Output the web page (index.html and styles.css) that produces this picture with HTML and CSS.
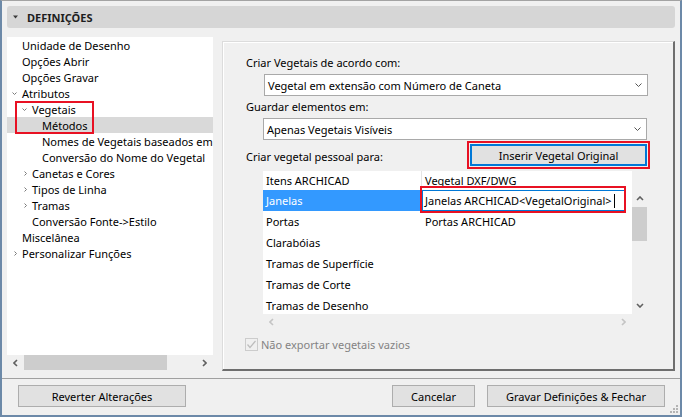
FILE: index.html
```html
<!DOCTYPE html>
<html lang="pt">
<head>
<meta charset="utf-8">
<title>Definições</title>
<link rel="stylesheet" href="styles.css">
</head>
<body>
<div class="win">
  <div class="content">
    <div class="header">
      <svg class="tri" width="5" height="4" viewBox="0 0 5 4"><polygon points="0,0.5 5,0.5 2.5,3.5" fill="#3a3a3a"/></svg>
      <span>DEFINIÇÕES</span>
    </div>
    <div class="main">
      <div class="left">
        <div class="tree">
          <div class="row l0"><span class="tw"></span><span>Unidade de Desenho</span></div>
          <div class="row l0"><span class="tw"></span><span>Opções Abrir</span></div>
          <div class="row l0"><span class="tw"></span><span>Opções Gravar</span></div>
          <div class="row l0"><span class="tw"><svg width="5" height="5" viewBox="0 0 5 5"><polyline points="0.5,1.5 2.5,3.5 4.5,1.5" fill="none" stroke="#7a7a7a" stroke-width="1"/></svg></span><span>Atributos</span></div>
          <div class="row l1"><span class="tw"><svg width="5" height="5" viewBox="0 0 5 5"><polyline points="0.5,1.5 2.5,3.5 4.5,1.5" fill="none" stroke="#7a7a7a" stroke-width="1"/></svg></span><span>Vegetais</span></div>
          <div class="row l2 sel"><span class="tw"></span><span>Métodos</span></div>
          <div class="row l2"><span class="tw"></span><span>Nomes de Vegetais baseados em Camadas</span></div>
          <div class="row l2"><span class="tw"></span><span>Conversão do Nome do Vegetal</span></div>
          <div class="row l1"><span class="tw"><svg class="col" width="5" height="5" viewBox="0 0 5 5"><polyline points="1.5,0.5 3.5,2.5 1.5,4.5" fill="none" stroke="#7a7a7a" stroke-width="1"/></svg></span><span>Canetas e Cores</span></div>
          <div class="row l1"><span class="tw"><svg class="col" width="5" height="5" viewBox="0 0 5 5"><polyline points="1.5,0.5 3.5,2.5 1.5,4.5" fill="none" stroke="#7a7a7a" stroke-width="1"/></svg></span><span>Tipos de Linha</span></div>
          <div class="row l1"><span class="tw"><svg class="col" width="5" height="5" viewBox="0 0 5 5"><polyline points="1.5,0.5 3.5,2.5 1.5,4.5" fill="none" stroke="#7a7a7a" stroke-width="1"/></svg></span><span>Tramas</span></div>
          <div class="row l1"><span class="tw"></span><span>Conversão Fonte-&gt;Estilo</span></div>
          <div class="row l0"><span class="tw"></span><span>Miscelânea</span></div>
          <div class="row l0"><span class="tw"><svg class="col" width="5" height="5" viewBox="0 0 5 5"><polyline points="1.5,0.5 3.5,2.5 1.5,4.5" fill="none" stroke="#7a7a7a" stroke-width="1"/></svg></span><span>Personalizar Funções</span></div>
          <div class="hl hl-tree"></div>
        </div>
        <div class="hscroll">
          <span class="sbtn"><svg width="5" height="8" viewBox="0 0 5 8"><polyline points="4,1 1,4 4,7" fill="none" stroke="#606060" stroke-width="1.6"/></svg></span>
          <span class="thumb-h"></span>
          <span class="track"></span>
          <span class="sbtn"><svg width="5" height="8" viewBox="0 0 5 8"><polyline points="1,1 4,4 1,7" fill="none" stroke="#606060" stroke-width="1.6"/></svg></span>
        </div>
      </div>

      <div class="group">
        <div class="label">Criar Vegetais de acordo com:</div>
        <div class="dd dd1"><span>Vegetal em extensão com Número de Caneta</span><svg width="7" height="4" viewBox="0 0 7 4"><polyline points="0.5,0.5 3.5,3.5 6.5,0.5" fill="none" stroke="#555" stroke-width="1"/></svg></div>
        <div class="label gap">Guardar elementos em:</div>
        <div class="dd dd2"><span>Apenas Vegetais Visíveis</span><svg width="7" height="4" viewBox="0 0 7 4"><polyline points="0.5,0.5 3.5,3.5 6.5,0.5" fill="none" stroke="#555" stroke-width="1"/></svg></div>
        <div class="row3">
          <div class="label l3">Criar vegetal pessoal para:</div>
          <div class="btn btn-insert">Inserir Vegetal Original<div class="hl hl-btn"></div></div>
        </div>
        <div class="table">
          <div class="tbody">
            <div class="list">
              <div class="trow thead"><div class="c1">Itens ARCHICAD</div><div class="c2">Vegetal DXF/DWG</div></div>
              <div class="trow"><div class="c1 selc">Janelas</div><div class="c2"><div class="edit"><span>Janelas ARCHICAD&lt;VegetalOriginal&gt;</span><span class="caret"></span><div class="hl hl-edit"></div></div></div></div>
              <div class="trow"><div class="c1">Portas</div><div class="c2">Portas ARCHICAD</div></div>
              <div class="trow"><div class="c1">Clarabóias</div><div class="c2"></div></div>
              <div class="trow"><div class="c1">Tramas de Superfície</div><div class="c2"></div></div>
              <div class="trow"><div class="c1">Tramas de Corte</div><div class="c2"></div></div>
              <div class="trow"><div class="c1">Tramas de Desenho</div><div class="c2"></div></div>
            </div>
            <div class="vscroll">
              <span class="vspace"></span>
              <span class="vbtn"><svg width="8" height="5" viewBox="0 0 8 5"><polyline points="1,4 4,1 7,4" fill="none" stroke="#606060" stroke-width="1.6"/></svg></span>
              <span class="thumb-v"></span>
              <span class="track"></span>
              <span class="vbtn"><svg width="8" height="5" viewBox="0 0 8 5"><polyline points="1,1 4,4 7,1" fill="none" stroke="#606060" stroke-width="1.6"/></svg></span>
            </div>
          </div>
          <div class="hscroll2">
            <span class="sbtn2"><svg width="5" height="8" viewBox="0 0 5 8"><polyline points="4,1 1,4 4,7" fill="none" stroke="#c4c4c4" stroke-width="1.6"/></svg></span>
            <span class="track"></span>
            <span class="sbtn2"><svg width="5" height="8" viewBox="0 0 5 8"><polyline points="1,1 4,4 1,7" fill="none" stroke="#c4c4c4" stroke-width="1.6"/></svg></span>
            <span class="corner"></span>
          </div>
        </div>
        <div class="chkrow">
          <span class="chk"><svg width="11" height="11" viewBox="0 0 11 11"><polyline points="1.5,5.5 4,8.5 9.5,2" fill="none" stroke="#bdbdbd" stroke-width="1.2"/></svg></span>
          <span class="chktxt">Não exportar vegetais vazios</span>
        </div>
      </div>
    </div>
  </div>
  <div class="footer">
    <div class="btn b-rev">Reverter Alterações</div>
    <div class="spacer"></div>
    <div class="btn b-can">Cancelar</div>
    <div class="btn b-sav">Gravar Definições &amp; Fechar</div>
    <svg class="grip" width="10" height="9" viewBox="0 0 10 9">
      <rect x="7" y="0" width="2" height="2" fill="#b4b4b4"/>
      <rect x="4" y="3" width="2" height="2" fill="#b4b4b4"/>
      <rect x="7" y="3" width="2" height="2" fill="#b4b4b4"/>
      <rect x="1" y="6" width="2" height="2" fill="#b4b4b4"/>
      <rect x="4" y="6" width="2" height="2" fill="#b4b4b4"/>
      <rect x="7" y="6" width="2" height="2" fill="#b4b4b4"/>
    </svg>
  </div>
</div>
</body>
</html>
```
FILE: styles.css
```css
* { box-sizing: border-box; }
html, body { margin: 0; padding: 0; }
body {
  font-family: "Noto Sans", "Segoe UI", "DejaVu Sans", sans-serif;
  font-size: 11px;
  color: #000;
  background: #f0f0f0;
}
.win {
  width: 682px;
  height: 417px;
  border-style: solid;
  border-width: 1px 2px 2px 2px;
  border-color: #a3a3a3 #6c89a8 #6c89a8 #6c89a8;
  background: #f0f0f0;
  display: flex;
  flex-direction: column;
}
.content { padding: 5px 5px 0 5px; }
.header {
  height: 22px;
  background: #d6d6d6;
  border-radius: 3px;
  display: flex;
  align-items: center;
  padding-left: 6px;
  font-weight: bold;
  font-size: 11px;
  color: #1e1e1e;
}
.header .tri { margin-right: 9px; }

.main { display: flex; margin-top: 9px; height: 334px; }

.left { width: 206px; display: flex; flex-direction: column; }
.tree {
  position: relative;
  background: #fff;
  height: 318px;
  overflow: hidden;
}
.row {
  height: 16px;
  display: flex;
  align-items: center;
  white-space: nowrap;
  padding-left: 5px;
}
.row.l1 { padding-left: 15px; }
.row.l2 { padding-left: 25px; }
.tw { width: 10px; flex: none; display: flex; align-items: center; }
.tw svg.col { margin-left: 1px; }
.row.sel { background: #d9d9d9; }

.hl { position: absolute; border: 2px solid #e81123; pointer-events: none; }
.hl-tree { left: 8px; top: 64px; width: 79px; height: 33px; }

.hscroll { height: 15px; display: flex; align-items: stretch; }
.sbtn { width: 17px; flex: none; display: flex; align-items: center; justify-content: center; }
.thumb-h { width: 143px; flex: none; background: #cdcdcd; }
.track { flex: 1; }

.group {
  margin-left: 9px;
  margin-top: 4px;
  width: 453px;
  height: 330px;
  border-style: solid;
  border-width: 1px 2px 2px 1px;
  border-color: #dcdcdc #6e6e6e #6e6e6e #dcdcdc;
  box-shadow: inset 1px 1px 0 #fff;
  padding: 13px 25px 0 23px;
  display: flex;
  flex-direction: column;
}
.label { height: 16px; line-height: 16px; white-space: nowrap; }
.label.gap { margin-top: 3px; }
.dd {
  height: 22px;
  margin-top: 3px;
  background: #fff;
  border: 1px solid #a9a9a9;
  display: flex;
  align-items: center;
  justify-content: space-between;
  padding: 0 5px 0 3px;
}
.dd1 { margin-left: 18px; }
.dd2 { margin-left: 17px; margin-right: 1px; }
.row3 {
  margin-top: 4px;
  display: flex;
  justify-content: space-between;
  align-items: flex-start;
}
.l3 { margin-top: 5px; }
.btn {
  height: 22px;
  background: #e1e1e1;
  border: 1px solid #adadad;
  display: flex;
  align-items: center;
  justify-content: center;
  white-space: nowrap;
  position: relative;
}
.btn-insert {
  width: 177px;
  margin-right: 1px;
  border: 2px solid #0078d7;
}
.hl-btn { left: -5px; top: -5px; right: -5px; bottom: -5px; }

.table {
  margin-top: 5px;
  margin-left: 17px;
  margin-right: 1px;
  height: 159px;
  display: flex;
  flex-direction: column;
}
.tbody { height: 143px; display: flex; }
.list { width: 369px; background: #fff; overflow: hidden; }
.trow { height: 21px; display: flex; white-space: nowrap; }
.trow.thead { height: 19px; }
.c1 { width: 159px; flex: none; padding-left: 3px; display: flex; align-items: center; }
.thead .c1 { border-right: 1px solid #e5e5e5; }
.c2 { flex: 1; padding-left: 3px; display: flex; align-items: center; }
.selc { background: #3399ff; color: #fff; width: 157px; margin-right: 2px; }
.trow .selc + .c2 { padding-left: 0; }
.edit {
  position: relative;
  width: 203px;
  height: 21px;
  border: 1px solid #0078d7;
  display: flex;
  align-items: center;
  padding-left: 2px;
}
.caret { width: 1px; height: 14px; background: #000; margin-left: 2px; }
.hl-edit { left: -3px; top: -5px; right: -2px; bottom: -3px; }

.vscroll { width: 15px; display: flex; flex-direction: column; }
.vspace { height: 19px; flex: none; }
.vbtn { height: 17px; flex: none; display: flex; align-items: center; justify-content: center; }
.thumb-v { height: 34px; flex: none; background: #cdcdcd; }

.hscroll2 { height: 16px; display: flex; }
.sbtn2 { width: 17px; flex: none; display: flex; align-items: center; justify-content: center; }
.corner { width: 15px; flex: none; }

.chkrow { margin-top: 8px; height: 13px; display: flex; align-items: center; margin-left: -1px; }
.chk {
  width: 13px;
  height: 13px;
  border: 1px solid #cccccc;
  display: flex;
  align-items: center;
  justify-content: center;
}
.chktxt { margin-left: 3px; color: #838383; white-space: nowrap; }

.footer {
  margin-top: 7px;
  border-top: 1px solid #a0a0a0;
  flex: 1;
  display: flex;
  align-items: flex-start;
  padding: 6px 15px 0 16px;
  position: relative;
}
.spacer { flex: 1; }
.b-rev { width: 168px; }
.b-can { width: 83px; }
.b-sav { width: 178px; margin-left: 12px; }
.grip { position: absolute; right: 1px; bottom: 1px; }
```
